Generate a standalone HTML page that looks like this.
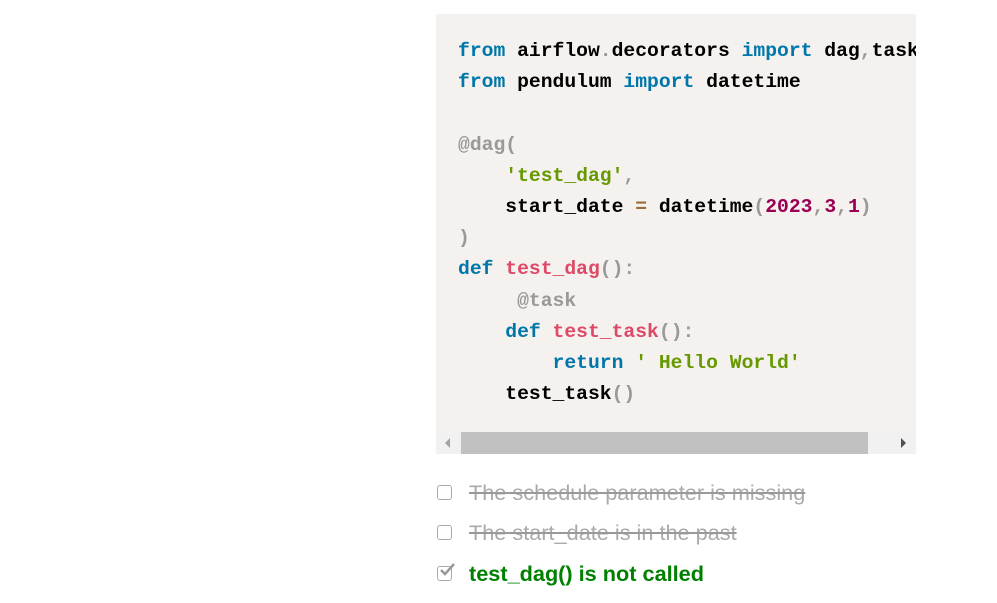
<!DOCTYPE html>
<html><head><style>
body{margin:0;width:997px;height:603px;background:#fff;position:relative;overflow:hidden}
.code{position:absolute;left:436px;top:14px;width:480px;height:440px;background:#f4f1ee;overflow:hidden}
pre{margin:0;position:absolute;left:22px;top:22px;font-family:"Liberation Mono",monospace;font-size:19.7px;font-weight:bold;line-height:31.2px;color:#000;white-space:pre}
.k{color:#0077aa}.p{color:#999}.s{color:#669900}.f{color:#dd4a68}.n{color:#990055}.o{color:#9a6e3a}.d{color:#999}
.sb{position:absolute;left:0;top:418px;width:480px;height:22px;background:#f1f1f1}
.th{position:absolute;left:25px;top:0;width:407px;height:22px;background:#c1c1c1}
.item{position:absolute;left:437px;font-family:"Liberation Sans",Arial,sans-serif;font-size:21.7px}
.cb{position:absolute;left:0;top:2px;width:13px;height:13px;border:1.5px solid #aaa;border-radius:3px;background:#fff}
.t{position:absolute;left:32px;top:-3px;white-space:nowrap;color:#aaa;text-decoration:line-through;text-decoration-color:#999}
</style></head><body>
<div class="code"><pre><span class="k">from</span> airflow<span class="p">.</span>decorators <span class="k">import</span> dag<span class="p">,</span>task
<span class="k">from</span> pendulum <span class="k">import</span> datetime

<span class="d">@dag</span><span class="p">(</span>
    <span class="s">'test_dag'</span><span class="p">,</span>
    start_date <span class="o">=</span> datetime<span class="p">(</span><span class="n">2023</span><span class="p">,</span><span class="n">3</span><span class="p">,</span><span class="n">1</span><span class="p">)</span>
<span class="p">)</span>
<span class="k">def</span> <span class="f">test_dag</span><span class="p">():</span>
     <span class="d">@task</span>
    <span class="k">def</span> <span class="f">test_task</span><span class="p">():</span>
        <span class="k">return</span> <span class="s">' Hello World'</span>
    test_task<span class="p">()</span></pre>
<div class="sb"><div class="th"></div>
<svg style="position:absolute;left:8px;top:6px" width="8" height="10"><path d="M6 0L1 5L6 10Z" fill="#a3a3a3"/></svg>
<svg style="position:absolute;left:464px;top:6px" width="8" height="10"><path d="M1 0L6 5L1 10Z" fill="#505050"/></svg>
</div></div>
<div class="item" style="top:483px"><div class="cb"></div><div class="t">The schedule parameter is missing</div></div>
<div class="item" style="top:523px"><div class="cb"></div><div class="t">The start_date is in the past</div></div>
<div class="item" style="top:564px"><div class="cb"></div>
<svg style="position:absolute;left:1px;top:-2px" width="18" height="16"><path d="M3 8L7 12L16 2" stroke="#999" stroke-width="2.5" fill="none"/></svg>
<div class="t" style="color:#008000;font-weight:bold;text-decoration:none">test_dag() is not called</div></div>
</body></html>
